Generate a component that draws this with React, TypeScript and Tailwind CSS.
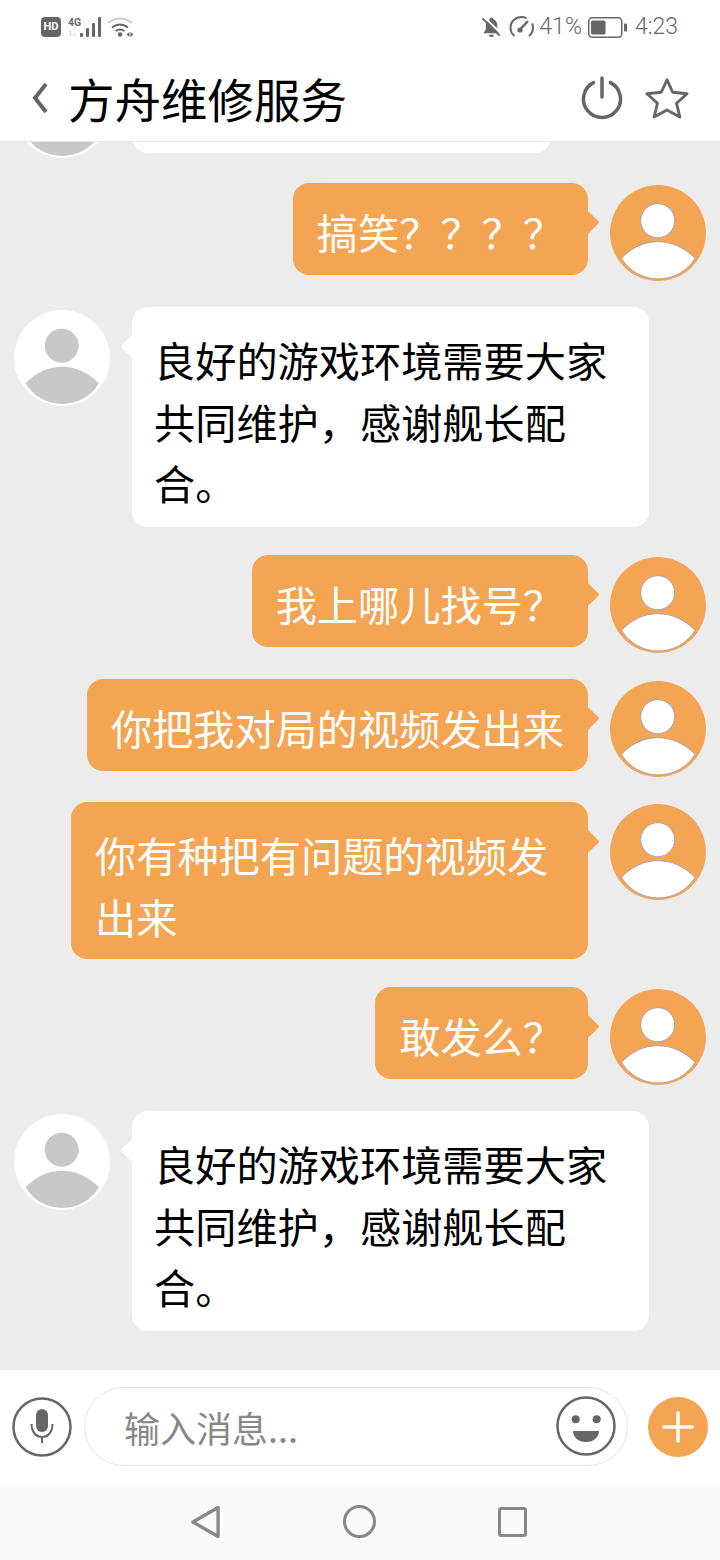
const CJK = "font-['Noto_Sans_CJK_SC','Noto_Sans',sans-serif]"
const ORANGE = "#f3a553"

// padding per line count, bubbles in the shot are not a clean multiple of the line height
const ONE_LINE = "pt-[18px] pb-[12.5px]"
const TWO_LINES = "pt-[22px] pb-[12px]"
const THREE_LINES = "pt-[22px] pb-[13.5px]"

function Avatar({ mine }: { mine?: boolean }) {
  const fill = mine ? "#ffffff" : "#c8c8c8"
  const line = mine ? "#a9a4b5" : "none"
  return (
    <svg
      width="96"
      height="96"
      viewBox="0 0 96 96"
      className={`shrink-0 ${mine ? "mb-[1px] mt-[2px]" : "mt-[3px]"}`}
    >
      <circle cx="48" cy="48" r="48" fill={mine ? ORANGE : "#ffffff"} />
      <circle cx="47.7" cy="35.7" r="17" fill={fill} stroke={line} strokeWidth="1" />
      <path
        d="M11.500 73.300C22 62 35 56.700 48 56.700S74 62 85 73.300A43 43 0 0 1 11.500 73.300Z"
        fill={fill}
        stroke={line}
        strokeWidth="1"
      />
    </svg>
  )
}

function Bubble({ text, mine, pad }: { text: string; mine?: boolean; pad: string }) {
  return (
    <div
      className={`relative mb-[3px] max-w-[517px] rounded-[16px] text-[41.2px] leading-[61.5px] ${pad} ${
        mine ? "bg-[#f3a553] px-[24px] text-white" : "bg-white pl-[22px] pr-[24px] text-black"
      }`}
    >
      <div
        className={`absolute top-[31px] h-[17px] w-[17px] rotate-45 rounded-[2px] ${
          mine ? "right-[-8px] bg-[#f3a553]" : "left-[-8px] bg-white"
        }`}
      />
      <p className="relative">{text}</p>
    </div>
  )
}

function Row({ text, mine, pad = ONE_LINE }: { text: string; mine?: boolean; pad?: string }) {
  if (mine) {
    return (
      <div className="flex items-start justify-end gap-[22px]">
        <Bubble text={text} mine pad={pad} />
        <Avatar mine />
      </div>
    )
  }
  return (
    <div className="flex items-start gap-[22px]">
      <Avatar />
      <Bubble text={text} pad={pad} />
    </div>
  )
}

function StatusBar() {
  return (
    <div className="flex h-[54px] items-center justify-between pl-[41px] pr-[42px] text-[#666666]">
      <div className="flex items-center">
        <div className="flex h-[20px] w-[20px] items-center justify-center rounded-[4px] bg-[#666666] font-['Roboto',sans-serif] text-[11px] font-bold text-white">
          HD
        </div>
        <svg width="68" height="24" viewBox="0 0 68 24" className="ml-[7px]" fill="#666666">
          <text x="0" y="10.500" fontSize="10.500" fontWeight="700" fontFamily="Roboto, sans-serif">4G</text>
          <text x="0" y="21" fontSize="8" fill="#bbbbbb" fontFamily="Roboto, sans-serif">1↓</text>
          <rect x="12" y="18" width="3" height="4" rx="1" />
          <rect x="18" y="13" width="3" height="9" rx="1" />
          <rect x="24" y="8" width="3" height="14" rx="1" />
          <rect x="30" y="2" width="3" height="20" rx="1" />
          <path d="M40 8Q52 -1 64 8" fill="none" stroke="#cccccc" strokeWidth="2" />
          <path d="M44 12.500Q52 6.500 60 12.500" fill="none" stroke="#666666" strokeWidth="2" />
          <path d="M47.500 16Q52 12.800 56.500 16" fill="none" stroke="#666666" strokeWidth="2" />
          <circle cx="52" cy="19.500" r="2.200" />
          <path d="M58.500 19.500l3-2.500v5zM62.500 17l3 2.500-3 2.500z" />
        </svg>
      </div>
      <div className="flex items-center font-['Roboto',sans-serif] text-[23px] font-light">
        <svg width="21" height="24" viewBox="0 0 22 24" fill="#666666">
          <path d="M11 2a1.800 1.800 0 0 0-1.800 1.800C6.500 4.600 5 7 5 10v5l-2.500 3.500h17L17 15v-5c0-3-1.500-5.400-4.200-6.200A1.800 1.800 0 0 0 11 2z" />
          <path d="M8.500 20h5c0 1.500-1 2.500-2.500 2.500S8.500 21.500 8.500 20z" />
          <path d="M3.500 1.500l18 18" stroke="#ffffff" strokeWidth="2" />
          <path d="M1.500 3l18 18" stroke="#666666" strokeWidth="2" />
        </svg>
        <svg width="26" height="24" viewBox="0 0 26 24" fill="none" stroke="#666666" strokeWidth="2" className="ml-[7px]">
          <path d="M5.500 21C3 19 1.500 16 1.500 12.500 1.500 6.500 6.500 2 12.500 2c2 0 3.500.4 5 1.300" />
          <path d="M23 8.500c.700 1.300 1 2.600 1 4 0 3.500-1.500 6.500-4 8.500" />
          <path d="M11 14.500L19 6" strokeWidth="2.500" />
          <circle cx="11" cy="15" r="1.600" fill="#666666" />
        </svg>
        <span className="ml-[4px] pt-[1px]">41%</span>
        <svg width="39" height="21" viewBox="0 0 39 21" className="ml-[6px]">
          <rect x="0.750" y="0.750" width="33" height="19.500" rx="3.500" fill="none" stroke="#666666" strokeWidth="1.500" />
          <rect x="3" y="3.500" width="14.500" height="14" rx="1.500" fill="#666666" />
          <rect x="36" y="6.500" width="3" height="8" rx="1" fill="#666666" />
        </svg>
        <span className="ml-[8px] pt-[1px]">4:23</span>
      </div>
    </div>
  )
}

function Header() {
  return (
    <div className="flex h-[88px] items-center border-b border-[#e8e8e8] pl-[32px] pr-[31px]">
      <svg width="16" height="32" viewBox="0 0 16 32" fill="none" stroke="#666666" strokeWidth="4">
        <path d="M14 2L3 16l11 14" />
      </svg>
      <h1 className="ml-[20px] text-[46.500px] font-normal leading-[60px] text-black">方舟维修服务</h1>
      <svg width="42" height="44" viewBox="0 0 42 44" fill="none" stroke="#666666" strokeWidth="3.500" strokeLinecap="round" className="ml-auto">
        <path d="M12.500 6.600A18.500 18.500 0 1 0 29.500 6.600" />
        <path d="M21 2v19" />
      </svg>
      <svg width="44" height="42" viewBox="0 0 46 44" fill="none" stroke="#666666" strokeWidth="3" strokeLinejoin="round" className="ml-[22px]">
        <path d="M23 3l6 13 15 1.500-11 10 3.500 14.500L23 34.500 9.500 42 13 27.500l-11-10L17 16z" />
      </svg>
    </div>
  )
}

function InputBar() {
  return (
    <div className="flex h-[114px] items-center bg-white pb-[1px] pl-[12px] pr-[12px]">
      <svg width="60" height="60" viewBox="0 0 60 60" className="shrink-0">
        <circle cx="30" cy="30" r="28.500" fill="none" stroke="#666666" strokeWidth="2.500" />
        <rect x="24" y="12" width="12" height="23" rx="6" fill="#666666" />
        <path d="M19.500 27c0 8 4.500 13 10.500 13s10.500-5 10.500-13M30 40v6" fill="none" stroke="#666666" strokeWidth="2" />
      </svg>
      <div className="relative ml-[12px] flex h-[79px] w-[544px] items-center rounded-full border border-[#e4e4e4] pl-[39px] text-[36px] text-[#888888]">
        输入消息...
        <svg width="60" height="60" viewBox="0 0 60 60" className="absolute right-[11px] top-[8px]">
          <circle cx="30" cy="30" r="28.500" fill="none" stroke="#666666" strokeWidth="2.500" />
          <circle cx="19.700" cy="23.300" r="4" fill="#666666" />
          <circle cx="40.700" cy="23.300" r="4" fill="#666666" />
          <path d="M17 35h26c0 6-5 11-13 11s-13-5-13-11z" fill="#666666" />
        </svg>
      </div>
      <div className="ml-[20px] flex h-[60px] w-[60px] shrink-0 items-center justify-center rounded-full bg-[#f3a553]">
        <svg width="32" height="32" viewBox="0 0 32 32" stroke="#ffffff" strokeWidth="3.500" strokeLinecap="round">
          <path d="M16 2v28M2 16h28" />
        </svg>
      </div>
    </div>
  )
}

function NavBar() {
  return (
    <div className="flex h-[76px] items-center justify-center bg-[#fafafa] pb-[1px] pr-[3px]">
      <svg width="29" height="34" viewBox="0 0 30 34" fill="none" stroke="#888888" strokeWidth="3.500" strokeLinejoin="round">
        <path d="M2 17L28 2v30z" />
      </svg>
      <div className="ml-[123px] h-[33px] w-[33px] rounded-full border-[3.500px] border-[#888888]" />
      <div className="ml-[122px] h-[30px] w-[29px] rounded-[3px] border-[3.500px] border-[#888888]" />
    </div>
  )
}

export default function App() {
  const reply = "良好的游戏环境需要大家共同维护，感谢舰长配合。"

  return (
    <div className={`flex h-[1560px] w-[720px] flex-col overflow-hidden bg-[#ececec] ${CJK}`}>
      <div className="bg-white">
        <StatusBar />
        <Header />
      </div>

      {/* chat scrolled to the bottom, the top row is cut off by the header */}
      <div className="flex min-h-0 flex-1 flex-col justify-end gap-[24.8px] overflow-hidden px-[14px] pb-[36px]">
        <div className="flex items-start gap-[22px]">
          <div className="-mt-[2px]">
            <Avatar />
          </div>
          <div className="mb-[3px] h-[92px] w-[419px] rounded-[16px] bg-white" />
        </div>
        <Row mine text="搞笑？？？？" />
        <Row pad={THREE_LINES} text={reply} />
        <Row mine text="我上哪儿找号？" />
        <Row mine text="你把我对局的视频发出来" />
        <Row mine pad={TWO_LINES} text="你有种把有问题的视频发出来" />
        <Row mine text="敢发么？" />
        <Row pad={THREE_LINES} text={reply} />
      </div>

      <InputBar />
      <NavBar />
    </div>
  )
}
